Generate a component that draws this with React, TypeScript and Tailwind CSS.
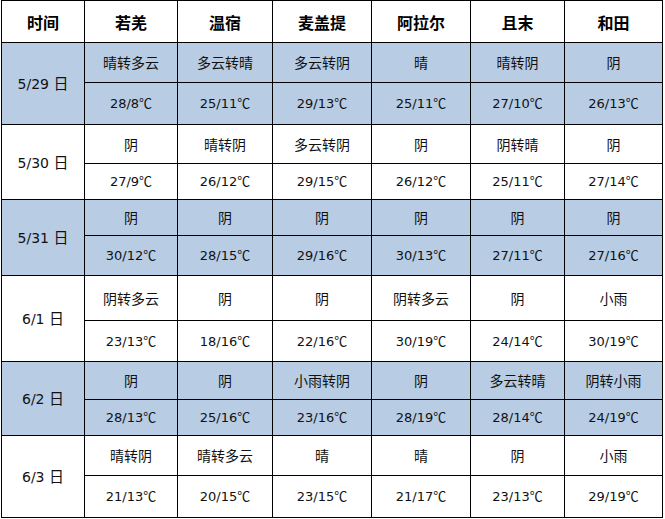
import React from "react";

type Day = {
  date: string;
  blue: boolean;
  h: [number, number];
  weather: string[];
  temp: string[];
};

const cities = ["若羌", "温宿", "麦盖提", "阿拉尔", "且末", "和田"];

const days: Day[] = [
  {
    date: "5/29",
    blue: true,
    h: [40, 42],
    weather: ["晴转多云", "多云转晴", "多云转阴", "晴", "晴转阴", "阴"],
    temp: ["28/8", "25/11", "29/13", "25/11", "27/10", "26/13"],
  },
  {
    date: "5/30",
    blue: false,
    h: [39, 36],
    weather: ["阴", "晴转阴", "多云转阴", "阴", "阴转晴", "阴"],
    temp: ["27/9", "26/12", "29/15", "26/12", "25/11", "27/14"],
  },
  {
    date: "5/31",
    blue: true,
    h: [36, 40],
    weather: ["阴", "阴", "阴", "阴", "阴", "阴"],
    temp: ["30/12", "28/15", "29/16", "30/13", "27/11", "27/16"],
  },
  {
    date: "6/1",
    blue: false,
    h: [45, 41],
    weather: ["阴转多云", "阴", "阴", "阴转多云", "阴", "小雨"],
    temp: ["23/13", "18/16", "22/16", "30/19", "24/14", "30/19"],
  },
  {
    date: "6/2",
    blue: true,
    h: [38, 36],
    weather: ["阴", "阴", "小雨转阴", "阴", "多云转晴", "阴转小雨"],
    temp: ["28/13", "25/16", "23/16", "28/19", "28/14", "24/19"],
  },
  {
    date: "6/3",
    blue: false,
    h: [40, 42],
    weather: ["晴转阴", "晴转多云", "晴", "晴", "阴", "小雨"],
    temp: ["21/13", "20/15", "23/15", "21/17", "23/13", "29/19"],
  },
];

const colWidths = [83, 93, 95, 99, 99, 94, 98];

const cjk = "font-['Noto_Sans_CJK_SC',sans-serif]";
const num = "font-['DejaVu_Sans','Noto_Sans_CJK_SC',sans-serif]";

export default function App() {
  return (
    <div className="w-[665px] h-[519px] bg-white pl-[1px]">
      <table className="border-collapse table-fixed text-black">
        <colgroup>
          {colWidths.map((w, i) => (
            <col key={i} style={{ width: w }} />
          ))}
        </colgroup>
        <tbody>
          <tr className="h-[42px]">
            <th className={`border border-black p-0 text-center text-[16px] font-bold ${cjk}`}>
              时间
            </th>
            {cities.map((c) => (
              <th
                key={c}
                className={`border border-black p-0 text-center text-[16px] font-bold ${cjk}`}
              >
                {c}
              </th>
            ))}
          </tr>
          {days.map((d) => {
            const bg = d.blue ? "bg-[#b8cce4]" : "bg-white";
            return (
              <React.Fragment key={d.date}>
                <tr style={{ height: d.h[0] }} className={bg}>
                  <td
                    rowSpan={2}
                    className={`border border-black p-0 text-center text-[14px] text-[#111] ${num}`}
                  >
                    {d.date} <span className={`${cjk} text-[15px]`}>日</span>
                  </td>
                  {d.weather.map((w, i) => (
                    <td
                      key={i}
                      className={`border border-black p-0 text-center text-[14px] text-[#111] ${cjk}`}
                    >
                      {w}
                    </td>
                  ))}
                </tr>
                <tr style={{ height: d.h[1] }} className={bg}>
                  {d.temp.map((t, i) => (
                    <td
                      key={i}
                      className={`border border-black p-0 text-center text-[13px] text-[#111] ${num}`}
                    >
                      {t}
                      <span className={cjk}>℃</span>
                    </td>
                  ))}
                </tr>
              </React.Fragment>
            );
          })}
        </tbody>
      </table>
    </div>
  );
}
